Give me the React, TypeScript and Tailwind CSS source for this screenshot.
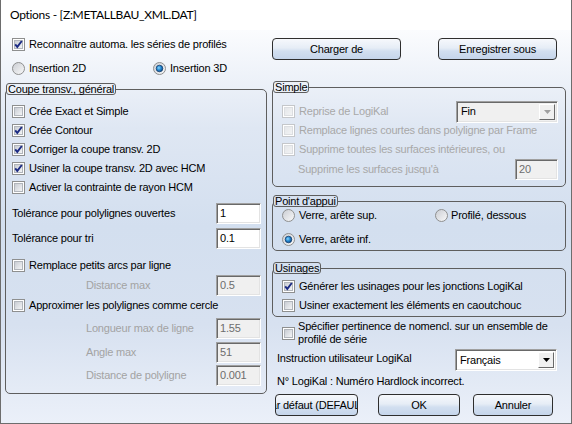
import React, { useId } from "react";

const gid = () => useId().replace(/[^a-zA-Z0-9]/g, "");

function Check({ checked = false, disabled = false }: { checked?: boolean; disabled?: boolean }) {
  const id = gid();
  return (
    <svg width="13" height="13" viewBox="0 0 13 13" className="shrink-0">
      <defs>
        <linearGradient id={id} x1="0" y1="0" x2="1" y2="1">
          <stop offset="0" stopColor={disabled ? "#e4e6e9" : "#c6cad1"} />
          <stop offset="1" stopColor={disabled ? "#f3f4f5" : "#f6f7f8"} />
        </linearGradient>
      </defs>
      <rect x="0.5" y="0.5" width="12" height="12" fill="#fff" stroke={disabled ? "#c5c7ca" : "#8e8f8f"} />
      <rect x="2.5" y="2.5" width="8" height="8" fill={`url(#${id})`} stroke={disabled ? "#dcdee1" : "#b1b5bb"} />
      {checked && (
        <path d="M3.2 6.3 L5.3 8.9 L9.8 3" fill="none" stroke="#1c2b84" strokeWidth="1.9" />
      )}
    </svg>
  );
}

function Radio({ selected = false }: { selected?: boolean }) {
  const id = gid();
  return (
    <svg width="13" height="13" viewBox="0 0 13 13" className="shrink-0">
      <defs>
        <linearGradient id={`${id}a`} x1="0" y1="0" x2="1" y2="1">
          <stop offset="0" stopColor="#c9ccd2" />
          <stop offset="1" stopColor="#fafafa" />
        </linearGradient>
        <radialGradient id={`${id}b`} cx="0.4" cy="0.4" r="0.6">
          <stop offset="0" stopColor="#8fd6fb" />
          <stop offset="0.5" stopColor="#2a8fd6" />
          <stop offset="1" stopColor="#0c4f93" />
        </radialGradient>
      </defs>
      <circle cx="6.5" cy="6.5" r="6" fill={`url(#${id}a)`} stroke="#8e8f8f" />
      {selected && <circle cx="6.5" cy="6.5" r="3.3" fill={`url(#${id}b)`} stroke="#173f6f" strokeWidth="0.8" />}
    </svg>
  );
}

function Btn({ children, w }: { children: React.ReactNode; w: string }) {
  return (
    <button
      className={`${w} h-[22px] shrink-0 rounded-[4px] border border-[#2e2e2e] bg-[linear-gradient(180deg,#f6f8fc_0%,#e6edf6_45%,#d2dff0_60%,#c5d5eb_100%)] flex items-center justify-center overflow-hidden whitespace-nowrap text-[11px] text-black`}
    >
      {children}
    </button>
  );
}

function Field({ value, disabled = false, w = "w-[45px]" }: { value: string; disabled?: boolean; w?: string }) {
  return (
    <div
      className={`${w} h-[21px] shrink-0 flex items-center pl-[3px] border border-t-[#a0a0a0] border-l-[#a0a0a0] border-r-white border-b-white shadow-[inset_1px_1px_0_#696969,inset_-1px_-1px_0_#e3e3e3] ${
        disabled ? "bg-[#f0f0f0] text-[#6d6d6d]" : "bg-white text-black"
      }`}
    >
      {value}
    </div>
  );
}

function Select({ value, disabled = false }: { value: string; disabled?: boolean }) {
  return (
    <div
      className={`w-[102px] h-[22px] shrink-0 flex items-stretch p-[2px] border border-t-[#a0a0a0] border-l-[#a0a0a0] border-r-white border-b-white shadow-[inset_1px_1px_0_#696969,inset_-1px_-1px_0_#e3e3e3] ${
        disabled ? "bg-[#f0f0f0]" : "bg-white"
      }`}
    >
      <span className="flex-1 flex items-center pl-[2px] text-black">{value}</span>
      <span className="w-[16px] flex items-center justify-center bg-[#f0f0f0] border border-t-white border-l-white border-r-[#696969] border-b-[#696969]">
        <svg width="7" height="4" viewBox="0 0 7 4">
          <path d="M0 0 H7 L3.5 4 Z" fill={disabled ? "#a0a0a0" : "#000"} />
        </svg>
      </span>
    </div>
  );
}

const legendCls = "px-[1px] h-[12px] leading-[10px] border border-[#5e5e5e] rounded-[3px]";
const fieldsetCls = "border border-[#5e5e5e] rounded-[5px] p-0 m-0";

export default function App() {
  return (
    <div className="w-[572px] h-[424px] flex flex-col border-x border-b border-[#6d6d6d] font-['Liberation_Sans',Arial,sans-serif] text-[11px] tracking-[-0.2px] text-black leading-none">
      <div className="h-[30px] shrink-0 bg-white flex items-center pl-[9px] font-['Lato',sans-serif] text-[12px] tracking-[-0.3px]">
        Options - [Z:METALLBAU_XML.DAT]
      </div>

      <div className="flex-1 flex gap-[5px] pl-[4px] pt-[8px] bg-[linear-gradient(180deg,#fbfcfe_0%,#dfe7f3_25%,#d3dfef_50%,#d7e1f0_75%,#ebf0f9_100%)]">
        {/* left column */}
        <div className="w-[262px] flex flex-col">
          <div className="h-[13px] flex items-center gap-[4px] pl-[7px]">
            <Check checked />
            <span>Reconnaître automa. les séries de profilés</span>
          </div>
          <div className="h-[13px] mt-[11px] flex items-center pl-[7px]">
            <div className="w-[141px] flex items-center gap-[4px]">
              <Radio />
              <span>Insertion 2D</span>
            </div>
            <div className="flex items-center gap-[4px]">
              <Radio selected />
              <span>Insertion 3D</span>
            </div>
          </div>

          <fieldset className={`${fieldsetCls} mt-[8px]`}>
            <legend className={legendCls}>Coupe transv., général</legend>
            <div className="flex flex-col pl-[6px] pr-[5px] pt-[7px] pb-[7px]">
              {[
                ["Crée Exact et Simple", false],
                ["Crée Contour", true],
                ["Corriger la coupe transv. 2D", true],
                ["Usiner la coupe transv. 2D avec HCM", true],
                ["Activer la contrainte de rayon HCM", false],
              ].map(([label, on]) => (
                <div key={label as string} className="h-[19px] flex items-center gap-[4px]">
                  <Check checked={on as boolean} />
                  <span>{label}</span>
                </div>
              ))}
              <div className="h-[21px] mt-[6px] flex items-center justify-between">
                <span>Tolérance pour polylignes ouvertes</span>
                <Field value="1" />
              </div>
              <div className="h-[21px] mt-[4px] flex items-center justify-between">
                <span>Tolérance pour tri</span>
                <Field value="0.1" />
              </div>
              <div className="h-[19px] mt-[7px] flex items-center gap-[4px]">
                <Check />
                <span>Remplace petits arcs par ligne</span>
              </div>
              <div className="h-[21px] flex items-center justify-between">
                <span className="ml-[74px] text-[#a3a3a3]">Distance max</span>
                <Field value="0.5" disabled />
              </div>
              <div className="h-[19px] flex items-center gap-[4px]">
                <Check />
                <span>Approximer les polylignes comme cercle</span>
              </div>
              <div className="h-[21px] mt-[3px] flex items-center justify-between">
                <span className="ml-[74px] text-[#a3a3a3]">Longueur max de ligne</span>
                <Field value="1.55" disabled />
              </div>
              <div className="h-[21px] mt-[3px] flex items-center justify-between">
                <span className="ml-[74px] text-[#a3a3a3]">Angle max</span>
                <Field value="51" disabled />
              </div>
              <div className="h-[21px] mt-[2px] flex items-center justify-between">
                <span className="ml-[74px] text-[#a3a3a3]">Distance de polyligne</span>
                <Field value="0.001" disabled />
              </div>
            </div>
          </fieldset>
        </div>

        {/* right column */}
        <div className="w-[294px] flex flex-col">
          <div className="flex gap-[37px]">
            <Btn w="w-[129px]">Charger de</Btn>
            <Btn w="w-[119px]">Enregistrer sous</Btn>
          </div>

          <fieldset className={`${fieldsetCls} mt-[21px]`}>
            <legend className={legendCls}>Simple</legend>
            <div className="flex flex-col pl-[9px] pr-[7px] pt-[9px] pb-[6px] text-[#a8a8a8]">
              <div className="h-[19px] flex items-center justify-between">
                <div className="flex items-center gap-[4px]">
                  <Check disabled />
                  <span>Reprise de LogiKal</span>
                </div>
                <Select value="Fin" disabled />
              </div>
              <div className="h-[19px] flex items-center gap-[4px]">
                <Check disabled />
                <span>Remplace lignes courtes dans polyligne par Frame</span>
              </div>
              <div className="h-[19px] flex items-center gap-[4px]">
                <Check disabled />
                <span>Supprime toutes les surfaces intérieures, ou</span>
              </div>
              <div className="h-[21px] flex items-center justify-between">
                <span className="ml-[16px]">Supprime les surfaces jusqu'à</span>
                <Field value="20" disabled w="w-[43px]" />
              </div>
            </div>
          </fieldset>

          <fieldset className={`${fieldsetCls} mt-[8px]`}>
            <legend className={legendCls}>Point d'appui</legend>
            <div className="flex flex-col pl-[9px] pb-[3px]">
              <div className="h-[16px] flex items-center">
                <div className="w-[153px] flex items-center gap-[4px]">
                  <Radio />
                  <span>Verre, arête sup.</span>
                </div>
                <div className="flex items-center gap-[3px]">
                  <Radio />
                  <span>Profilé, dessous</span>
                </div>
              </div>
              <div className="h-[16px] mt-[8px] flex items-center gap-[4px]">
                <Radio selected />
                <span>Verre, arête inf.</span>
              </div>
            </div>
          </fieldset>

          <fieldset className={`${fieldsetCls} mt-[11px]`}>
            <legend className={legendCls}>Usinages</legend>
            <div className="flex flex-col pl-[9px] pt-[3px] pb-[1px]">
              <div className="h-[19px] flex items-center gap-[4px]">
                <Check checked />
                <span>Générer les usinages pour les jonctions LogiKal</span>
              </div>
              <div className="h-[19px] flex items-center gap-[4px]">
                <Check />
                <span>Usiner exactement les éléments en caoutchouc</span>
              </div>
            </div>
          </fieldset>

          <div className="mt-[3px] pl-[10px] flex items-center gap-[3px]">
            <Check />
            <span className="leading-[13px]">
              Spécifier pertinence de nomencl. sur un ensemble de
              <br />
              profilé de série
            </span>
          </div>

          <div className="mt-[3px] pl-[5px] pr-[9px] flex items-center justify-between">
            <span className="pb-[4px]">Instruction utilisateur LogiKal</span>
            <Select value="Français" />
          </div>

          <div className="h-[13px] mt-[4px] pl-[5px] flex items-center">
            N° LogiKal : Numéro Hardlock incorrect.
          </div>

          <div className="mt-[6px] pl-[3px] flex">
            <Btn w="w-[83px]">Par défaut (DEFAULT)</Btn>
            <div className="w-[20px]" />
            <Btn w="w-[82px]">OK</Btn>
            <div className="w-[13px]" />
            <Btn w="w-[80px]">Annuler</Btn>
          </div>
        </div>
      </div>
    </div>
  );
}
